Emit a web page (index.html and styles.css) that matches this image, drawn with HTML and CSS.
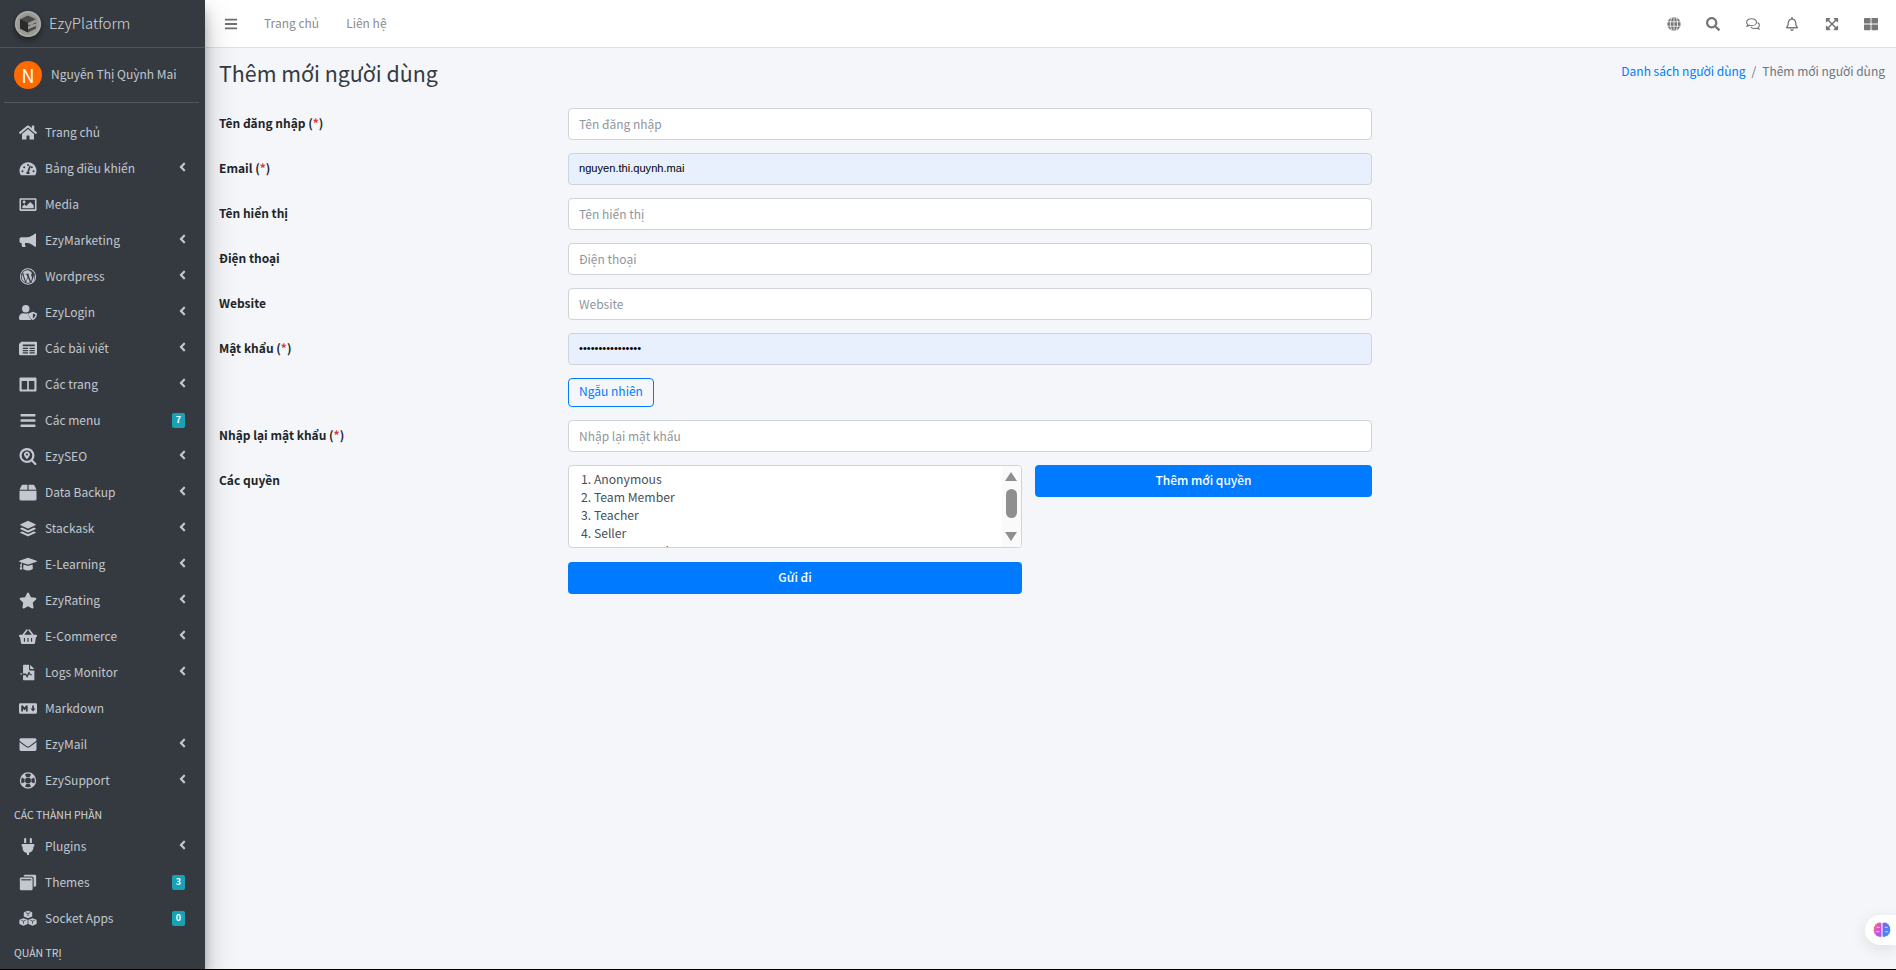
FILE: index.html
```html
<!DOCTYPE html>
<html lang="vi">
<head>
<meta charset="utf-8">
<title>Thêm mới người dùng</title>
<link rel="stylesheet" href="styles.css">
</head>
<body>
<svg class="sprite" xmlns="http://www.w3.org/2000/svg" aria-hidden="true">
  <symbol id="i-home" viewBox="0 0 576 512"><path d="M280.37 148.26L96 300.11V464a16 16 0 0 0 16 16l112.06-.29a16 16 0 0 0 15.92-16V368a16 16 0 0 1 16-16h64a16 16 0 0 1 16 16v95.64a16 16 0 0 0 16 16.05L464 480a16 16 0 0 0 16-16V300L295.67 148.26a12.19 12.19 0 0 0-15.3 0zM571.6 251.47L488 182.56V44.05a12 12 0 0 0-12-12h-56a12 12 0 0 0-12 12v72.61L318.47 43a48 48 0 0 0-61 0L4.34 251.47a12 12 0 0 0-1.6 16.9l25.5 31A12 12 0 0 0 45.15 301l235.22-193.74a12.19 12.19 0 0 1 15.3 0L530.9 301a12 12 0 0 0 16.9-1.6l25.5-31a12 12 0 0 0-1.7-16.93z"/></symbol>
  <symbol id="i-bars" viewBox="0 0 448 512"><path d="M16 132h416c8.837 0 16-7.163 16-16V76c0-8.837-7.163-16-16-16H16C7.163 60 0 67.163 0 76v40c0 8.837 7.163 16 16 16zm0 160h416c8.837 0 16-7.163 16-16v-40c0-8.837-7.163-16-16-16H16c-8.837 0-16 7.163-16 16v40c0 8.837 7.163 16 16 16zm0 160h416c8.837 0 16-7.163 16-16v-40c0-8.837-7.163-16-16-16H16c-8.837 0-16 7.163-16 16v40c0 8.837 7.163 16 16 16z"/></symbol>
  <symbol id="i-search" viewBox="0 0 512 512"><path d="M505 442.7L405.3 343c-4.5-4.5-10.6-7-17-7H372c27.6-35.3 44-79.7 44-128C416 93.1 322.9 0 208 0S0 93.1 0 208s93.1 208 208 208c48.3 0 92.7-16.4 128-44v16.3c0 6.4 2.5 12.5 7 17l99.7 99.7c9.4 9.4 24.6 9.4 33.9 0l28.3-28.3c9.4-9.4 9.4-24.6.1-34zM208 336c-70.7 0-128-57.2-128-128 0-70.7 57.2-128 128-128 70.7 0 128 57.2 128 128 0 70.7-57.2 128-128 128z"/></symbol>
  <symbol id="i-star" viewBox="0 0 576 512"><path d="M259.3 17.8L194 150.2 47.9 171.5c-26.2 3.8-36.7 36.1-17.7 54.6l105.7 103-25 145.5c-4.5 26.3 23.2 46 46.4 33.7L288 439.6l130.7 68.7c23.2 12.2 50.9-7.4 46.4-33.7l-25-145.5 105.7-103c19-18.5 8.5-50.8-17.7-54.6L382 150.2 316.7 17.8c-11.7-23.6-45.6-23.9-57.4 0z"/></symbol>
  <symbol id="i-angle" viewBox="0 0 256 512"><path d="M31.7 239l136-136c9.4-9.4 24.6-9.4 33.9 0l22.6 22.6c9.4 9.4 9.4 24.6 0 33.9L127.9 256l96.4 96.4c9.4 9.4 9.4 24.6 0 33.9L201.7 409c-9.4 9.4-24.6 9.4-33.9 0l-136-136c-9.5-9.4-9.5-24.6-.1-34z"/></symbol>
  <symbol id="i-mail" viewBox="0 0 512 512"><path d="M502.3 190.8c3.9-3.1 9.7-.2 9.7 4.7V400c0 26.5-21.5 48-48 48H48c-26.5 0-48-21.5-48-48V195.6c0-5 5.7-7.8 9.7-4.7 22.4 17.4 52.1 39.5 154.1 113.6 21.1 15.4 56.7 47.8 92.2 47.6 35.7.3 72-32.8 92.3-47.6 102-74.1 131.6-96.3 154-113.7zM256 320c23.2.4 56.6-29.2 73.4-41.4 132.7-96.3 142.8-104.7 173.4-128.7 5.8-4.5 9.2-11.5 9.2-18.9v-19c0-26.5-21.5-48-48-48H48C21.5 64 0 85.5 0 112v19c0 7.4 3.4 14.3 9.2 18.9 30.6 23.9 40.7 32.4 173.4 128.7 16.8 12.2 50.2 41.8 73.4 41.4z"/></symbol>
  <symbol id="i-grid" viewBox="0 0 512 512"><path d="M296 32h192c13.255 0 24 10.745 24 24v160c0 13.255-10.745 24-24 24H296c-13.255 0-24-10.745-24-24V56c0-13.255 10.745-24 24-24zm-80 0H24C10.745 32 0 42.745 0 56v160c0 13.255 10.745 24 24 24h192c13.255 0 24-10.745 24-24V56c0-13.255-10.745-24-24-24zM0 296v160c0 13.255 10.745 24 24 24h192c13.255 0 24-10.745 24-24V296c0-13.255-10.745-24-24-24H24c-13.255 0-24 10.745-24 24zm296 184h192c13.255 0 24-10.745 24-24V296c0-13.255-10.745-24-24-24H296c-13.255 0-24 10.745-24 24v160c0 13.255 10.745 24 24 24z"/></symbol>
  <symbol id="i-expand" viewBox="0 0 448 512"><path d="M448 344v112a23.94 23.94 0 0 1-24 24H312c-21.39 0-32.09-25.9-17-41l36.2-36.2L224 295.6 116.77 402.9 153 439c15.09 15.1 4.39 41-17 41H24a23.94 23.94 0 0 1-24-24V344c0-21.4 25.89-32.1 41-17l36.19 36.2L184.46 256 77.18 148.7 41 185c-15.1 15.1-41 4.4-41-17V56a23.94 23.94 0 0 1 24-24h112c21.39 0 32.09 25.9 17 41l-36.2 36.2L224 216.4l107.23-107.3L295 73c-15.09-15.1-4.39-41 17-41h112a23.94 23.94 0 0 1 24 24v112c0 21.4-25.89 32.1-41 17l-36.19-36.2L263.54 256l107.28 107.3L407 327.1c15.1-15.2 41-4.5 41 16.9z"/></symbol>
  <symbol id="i-bell" viewBox="0 0 448 512"><path d="M439.39 362.29c-19.32-20.76-55.47-51.99-55.47-154.29 0-77.7-54.48-139.9-127.94-155.16V32c0-17.67-14.32-32-31.98-32s-31.98 14.33-31.98 32v20.84C118.56 68.1 64.08 130.3 64.08 208c0 102.3-36.15 133.53-55.47 154.29-6 6.45-8.66 14.16-8.61 21.71.11 16.4 12.98 32 32.1 32h383.8c19.12 0 32-15.6 32.1-32 .05-7.55-2.61-15.27-8.61-21.71zM67.53 368c21.22-27.97 44.42-74.33 44.53-159.42 0-.2-.06-.38-.06-.58 0-61.86 50.14-112 112-112s112 50.14 112 112c0 .2-.06.38-.06.58.11 85.1 23.31 131.46 44.53 159.42H67.53zM224 512c35.32 0 63.97-28.65 63.97-64H160.03c0 35.35 28.65 64 63.97 64z"/></symbol>
  <symbol id="i-globe" viewBox="0 0 24 24"><circle cx="12" cy="12" r="11.5"/><path d="M1 8.200h22M1 15.800h22M12 .5v23M8.600 1C5 7 5 17 8.600 23M15.400 1C19 7 19 17 15.400 23" fill="none" stroke="#fff" stroke-width="1.300"/></symbol>
  <symbol id="i-comments" viewBox="0 0 24 24"><path d="M9.500 3C4.800 3 1 5.700 1 9c0 1.500.8 2.900 2.100 4-.3 1.100-1.100 2.100-1.600 2.700 1.600-.1 3.200-.7 4.300-1.500 1.100.4 2.400.7 3.700.7 4.700 0 8.500-2.700 8.500-6S14.200 3 9.500 3z" fill="none" stroke="currentColor" stroke-width="1.900"/><path d="M19.600 9.500c2 1 3.400 2.500 3.400 4.500 0 1.500-.8 2.800-2.100 3.900.3 1.100 1.100 2.100 1.600 2.700-1.600-.1-3.200-.7-4.300-1.500-1 .4-2.300.7-3.600.7-2.600 0-4.900-1-6.300-2.500" fill="none" stroke="currentColor" stroke-width="1.900"/></symbol>
  <symbol id="i-gauge" viewBox="0 0 24 24"><path fill-rule="evenodd" d="M12 3C5.400 3 0 8.400 0 15c0 2.200.6 4.300 1.700 6 .2.300.6.500 1 .5h18.600c.4 0 .8-.2 1-.5 1.100-1.700 1.700-3.800 1.700-6 0-6.600-5.400-12-12-12zm0 2.800a1.400 1.400 0 1 1 0 2.800 1.400 1.400 0 0 1 0-2.800zM4.200 17.200a1.400 1.400 0 1 1 0-2.800 1.400 1.400 0 0 1 0 2.800zm2.400-5.600a1.400 1.400 0 1 1 0-2.800 1.400 1.400 0 0 1 0 2.800zm7.600 8.100h-4.400a3 3 0 0 1 1.300-3.500l2.700-7.600c.2-.6.800-.9 1.400-.7.6.2.9.8.7 1.400l-2.500 7.500c.9.700 1.200 1.900.8 2.900zm3.200-8.100a1.400 1.400 0 1 1 0-2.800 1.400 1.400 0 0 1 0 2.800zm2.400 5.600a1.400 1.400 0 1 1 0-2.800 1.400 1.400 0 0 1 0 2.800z"/></symbol>
  <symbol id="i-image" viewBox="0 0 24 24"><path fill-rule="evenodd" d="M1.500 3h21c.8 0 1.500.7 1.500 1.500v15c0 .8-.7 1.500-1.500 1.500h-21C.7 21 0 20.300 0 19.500v-15C0 3.700.7 3 1.500 3zm.7 2.200v13.600h19.600V5.200H2.200zM6.500 6.500a2 2 0 1 1 0 4 2 2 0 0 1 0-4zM4 17.200v-2.400l3-3 2.400 2.400 5.800-5.800L20 13.200v4H4z"/></symbol>
  <symbol id="i-horn" viewBox="0 0 24 24"><path d="M22.800 2.100c-.3-.2-.6-.2-.9 0C18.600 4.700 15 7.500 10.500 7.500h-8C1.100 7.500 0 8.600 0 10v3c0 1.400 1.100 2.500 2.500 2.500H3c-.1.5-.1 1-.1 1.500 0 1.300.3 2.600.9 3.700.2.300.5.500.9.500h3c.8 0 1.300-.9.800-1.500-.5-.8-.8-1.700-.8-2.700 0-.5.100-1 .2-1.500h2.600c4.500 0 8.100 2.800 11.400 5.400.3.200.6.200.9 0 .3-.1.500-.4.500-.7V2.800c0-.3-.2-.6-.5-.7z"/></symbol>
  <symbol id="i-wp" viewBox="0 0 24 24"><path fill-rule="evenodd" d="M12 .5a11.500 11.500 0 1 0 0 23 11.500 11.500 0 0 0 0-23zm0 1.300a10.200 10.200 0 1 1 0 20.400 10.200 10.200 0 0 1 0-20.400zm0 1.200a9 9 0 0 0-8 4.900h1.500l1.300.1v.9l-1.300.1 3.700 10 2.200-6.400-1.600-3.600-1.300-.1v-.9h5.300v.9l-1.300.1 3.700 10 1.100-3.500c.5-1.800.3-3-.4-4.200-.5-.8-.8-1.500-.4-2.400.3-.7.900-1 1.500-1A9 9 0 0 0 12 3zM3 12c0 3.500 2 6.600 5 8.100L3.700 8.600C3.200 9.600 3 10.800 3 12zm18 0c0-1.200-.2-2.300-.7-3.300.1 1.200 0 2.400-.4 3.600l-3 8.500A9 9 0 0 0 21 12zm-9 1.300L9.400 20.600a9 9 0 0 0 5.300-.1L12 13.300z"/></symbol>
  <symbol id="i-usershield" viewBox="0 0 24 20"><circle cx="9" cy="5" r="5"/><path d="M0 18v-1.500C0 13.500 2.500 11 5.500 11h1c.8.400 1.600.5 2.500.5s1.700-.1 2.500-.5h1.200c-.1 2.500.7 6 3.600 8.500-.4.300-.9.500-1.300.5H2a2 2 0 0 1-2-2z"/><path fill-rule="evenodd" d="M18.500 9l5 2c.3.100.5.400.5.700 0 3.800-2 7-5.300 8.200-.1.100-.3.100-.4 0-3.300-1.200-5.300-4.400-5.300-8.200 0-.3.200-.6.500-.7l5-2zm0 2.200v6.800c2-.9 3.200-2.800 3.300-5.200l-3.300-1.600z"/></symbol>
  <symbol id="i-news" viewBox="0 0 24 18"><path fill-rule="evenodd" d="M3 0h20c.6 0 1 .4 1 1v15c0 1.100-.9 2-2 2H2a2 2 0 0 1-2-2V3.500C0 2.700.7 2 1.500 2H2V1c0-.6.4-1 1-1zM5 3.500h16V6H5V3.500zM5 8h7v1.500H5V8zm9 0h7v1.500h-7V8zM5 11h7v1.500H5V11zm9 0h7v1.500h-7V11zM5 14h7v1.500H5V14zm9 0h7v1.500h-7V14z"/></symbol>
  <symbol id="i-cols" viewBox="0 0 24 24"><path fill-rule="evenodd" d="M1.500 2h21c.8 0 1.500.7 1.500 1.500v17c0 .8-.7 1.500-1.500 1.500h-21C.7 22 0 21.300 0 20.500v-17C0 2.700.7 2 1.500 2zM3 7v12h7.800V7H3zm10.200 0v12H21V7h-7.800z"/></symbol>
  <symbol id="i-seo" viewBox="0 0 24 24"><path fill-rule="evenodd" d="M10.500 0a10.500 10.500 0 0 1 8.400 16.800l4.600 4.600c.6.600.6 1.500 0 2.100-.6.600-1.500.6-2.100 0l-4.600-4.600A10.500 10.500 0 1 1 10.500 0zm0 3a7.500 7.500 0 1 0 0 15 7.500 7.500 0 0 0 0-15zm0 2c2.300 0 4.200 1.900 4.200 4.200 0 1.900-2.800 5.200-3.700 6.300-.3.300-.7.300-1 0-.9-1.100-3.700-4.400-3.700-6.300C6.300 6.900 8.200 5 10.500 5zm0 2.700a1.500 1.500 0 1 0 0 3 1.500 1.500 0 0 0 0-3z"/></symbol>
  <symbol id="i-box" viewBox="0 0 24 24"><path d="M11.200 1v7H0l2.700-5.700C3.100 1.500 3.900 1 4.800 1h6.400zM12.800 1h6.400c.9 0 1.700.5 2.100 1.300L24 8H12.800V1zM0 9.500h24V21c0 1.200-1 2.200-2.200 2.200H2.200C1 23.200 0 22.200 0 21V9.500z"/></symbol>
  <symbol id="i-layers" viewBox="0 0 24 24"><path d="M12 1l10.500 5c.7.300.7 1.100 0 1.400L12.500 12c-.3.200-.7.200-1 0L1.500 7.400c-.7-.3-.7-1.100 0-1.400L12 1z"/><path d="M3.800 10.600l-2.300 1c-.7.300-.7 1.100 0 1.400l10 4.600c.3.200.7.200 1 0l10-4.600c.7-.3.700-1.100 0-1.400l-2.300-1-7.700 3.700c-.3.200-.7.200-1 0l-7.700-3.700z"/><path d="M3.800 16.100l-2.300 1c-.7.300-.7 1.100 0 1.400l10 4.500c.3.200.7.200 1 0l10-4.500c.7-.3.700-1.100 0-1.400l-2.300-1-7.700 3.600c-.3.200-.7.200-1 0l-7.700-3.600z"/></symbol>
  <symbol id="i-grad" viewBox="0 0 24 20"><path d="M12 1l11.500 4c.6.200.6 1 0 1.200L12.600 10c-.4.100-.8.100-1.200 0L4.300 7.500c-.6.500-1 1.300-1 2.100.5.200.8.700.8 1.200s-.3.900-.7 1.100l1 4.200c.1.300-.1.600-.4.600H1.500c-.3 0-.5-.3-.4-.6l1-4.200c-.4-.2-.7-.6-.7-1.100 0-.6.400-1.100.9-1.200.1-1 .4-1.900 1-2.700L.5 6.200C-.1 6-.1 5.200.5 5L12 1z"/><path d="M6 10l5 1.700c.6.200 1.300.2 1.900 0l5.100-1.700.5 5c0 1.700-2.900 3-6.500 3s-6.500-1.300-6.500-3L6 10z"/></symbol>
  <symbol id="i-basket" viewBox="0 0 24 20"><path fill-rule="evenodd" d="M0 8.500c0-.6.4-1 1-1h3.300L9.500.9c.3-.5 1-.7 1.500-.4.500.3.700 1 .4 1.500L7 7.500h10l-4.400-5.500c-.3-.5-.1-1.200.4-1.500.5-.3 1.200-.1 1.500.4l5.200 6.600H23c.6 0 1 .4 1 1v1c0 .6-.4 1-1 1h-.4l-1.200 7.800c-.1 1-1 1.700-2 1.700H4.600c-1 0-1.900-.7-2-1.700L1.400 10.500H1c-.6 0-1-.4-1-1v-1zM6.500 12v5H8v-5H6.500zm4.700 0v5h1.600v-5h-1.600zm4.800 0v5h1.500v-5H16z"/></symbol>
  <symbol id="i-logfile" viewBox="0 0 24 24"><path d="M6 1h7.500v6.500c0 .8.700 1.500 1.500 1.500h6v13a1 1 0 0 1-1 1H6a1 1 0 0 1-1-1v-6h3.700l1.500 2.800c.3.500 1 .5 1.300 0l2.200-5 1 2.200h2.800v-1.500h-1.900l-1.500-3.200c-.3-.6-1.100-.6-1.400 0l-2 4.500-1.100-2.200c-.1-.2-.3-.3-.6-.3H5V2a1 1 0 0 1 1-1z"/><path d="M15 1l6 6h-6V1z"/><path d="M1 13.200h3v1.500H1z"/></symbol>
  <symbol id="i-md" viewBox="0 0 28 18"><path fill-rule="evenodd" d="M2 1h24a2 2 0 0 1 2 2v12a2 2 0 0 1-2 2H2a2 2 0 0 1-2-2V3a2 2 0 0 1 2-2zm1.500 3.500v9h2.700V9.200l2.300 2.900 2.300-2.900v4.300h2.700v-9h-2.700L8.500 7.400 6.200 4.500H3.500zm17 0V9h-2.700l4 4.500 4-4.500h-2.600V4.500h-2.700z"/></symbol>
  <symbol id="i-ring" viewBox="0 0 24 24"><path fill-rule="evenodd" d="M12 .5a11.500 11.500 0 1 1 0 23 11.500 11.500 0 0 1 0-23zM7.600 3.400l2.300 4c1.300-.6 2.900-.6 4.200 0l2.300-4a9.700 9.700 0 0 0-8.800 0zM3.400 7.600a9.700 9.700 0 0 0 0 8.800l4-2.300c-.6-1.300-.6-2.900 0-4.200l-4-2.300zm17.200 0l-4 2.300c.6 1.300.6 2.900 0 4.200l4 2.300a9.700 9.700 0 0 0 0-8.800zM12 7.800a4.200 4.200 0 1 0 0 8.400 4.200 4.200 0 0 0 0-8.400zm-2.100 8.800l-2.300 4a9.700 9.700 0 0 0 8.800 0l-2.300-4c-1.300.6-2.900.6-4.200 0z"/></symbol>
  <symbol id="i-plug" viewBox="0 0 24 24"><path d="M8 0c.8 0 1.500.7 1.500 1.500V7h-3V1.500C6.500.7 7.200 0 8 0zM16 0c.8 0 1.500.7 1.500 1.500V7h-3V1.500C14.500.7 15.200 0 16 0zM4 8.500h16c.6 0 1 .4 1 1V11c0 .6-.4 1-1 1h-.3v1.500c0 3.600-2.600 6.700-6.200 7.300V24h-3v-2.700c-3.600-.6-6.200-3.700-6.200-7.300V12H4c-.6 0-1-.4-1-1V9.500c0-.6.400-1 1-1z"/></symbol>
  <symbol id="i-windows" viewBox="0 0 24 24"><path d="M8 1h13.500c1.100 0 2 .9 2 2v13c0 1.100-.9 2-2 2H20V6.500c0-1.700-1.300-3-3-3H6V3c0-1.100.9-2 2-2z"/><path d="M2.500 5h14c1.100 0 2 .9 2 2v14c0 1.100-.9 2-2 2h-14c-1.100 0-2-.9-2-2V7c0-1.100.9-2 2-2z"/><path d="M2.500 8.200h14" stroke="#343a40" stroke-width="1.600"/></symbol>
  <symbol id="i-cubes" viewBox="0 0 24 22"><path d="M12 .5l5.600 2.200v5.600L12 10.700 6.400 8.300V2.700L12 .5z"/><path d="M6 10.500l5.500 2.200v5.600L6 20.700.5 18.300v-5.600L6 10.500zM18 10.500l5.500 2.200v5.600L18 20.700l-5.500-2.400v-5.600l5.500-2.200z"/><path d="M9 3.200l3 1.200 3-1.200M12 4.400v3.500M3 13.300l3 1.200 3-1.200M6 14.500V18M15 13.300l3 1.200 3-1.200M18 14.500V18" fill="none" stroke="#343a40" stroke-width="1"/></symbol>
  <symbol id="i-logo" viewBox="0 0 26 26"><path d="M13 4.500l8 3.700v9.400L13 21.500l-8-3.900V8.200z" fill="#4a4a4a"/><path d="M5 8.200l8 3.700v9.600l-8-3.900z" fill="#2a2a2a"/><path d="M13 11.900l8-3.700v3l-4 2.200 4-.6v2.200l-8 3.200v-2.600l3.600-2.200-3.600.7z" fill="#9a9a98"/></symbol>
  <symbol id="i-brain" viewBox="0 0 20 18"><defs><linearGradient id="brain-l" x1="0" y1="0" x2="1" y2="1"><stop offset="0" stop-color="#ff8a1e"/><stop offset=".5" stop-color="#d94fe0"/><stop offset="1" stop-color="#9b57f5"/></linearGradient><linearGradient id="brain-r" x1="0" y1="0" x2="1" y2="1"><stop offset="0" stop-color="#8a5cf0"/><stop offset="1" stop-color="#1e9bff"/></linearGradient></defs><path d="M9.400 1.500C8.700.6 7.500.3 6.500.8 5.500.6 4.400 1.100 4 2.100 2.800 2.400 2 3.400 2 4.600c-1.100.7-1.500 2.100-1 3.300-.7 1-.6 2.500.3 3.400-.2 1.300.6 2.600 1.900 3 .4 1.200 1.600 2 2.800 1.800.8.900 2.300 1 3.400.3V1.500z" fill="url(#brain-l)"/><path d="M10.600 1.500c.7-.9 1.900-1.200 2.900-.7 1-.2 2.100.3 2.500 1.300 1.200.3 2 1.300 2 2.500 1.100.7 1.500 2.100 1 3.300.7 1 .6 2.500-.3 3.400.2 1.300-.6 2.600-1.900 3-.4 1.200-1.600 2-2.800 1.800-.8.900-2.300 1-3.400.3V1.500z" fill="url(#brain-r)"/><path d="M4 6h3.500M3.500 11H7M13 6h3.500M13.500 11H17" stroke="#fff" stroke-width=".8" fill="none"/></symbol>
</svg>

<div class="app">
  <aside class="sidebar">
    <a class="brand" href="#">
      <span class="brand-logo"><svg class="brand-mark"><use href="#i-logo"/></svg></span>
      <span class="brand-text">EzyPlatform</span>
    </a>
    <div class="user">
      <span class="avatar">N</span>
      <span class="user-name">Nguyễn Thị Quỳnh Mai</span>
    </div>
    <nav class="menu">
      <a class="item" href="#"><svg class="ico"><use href="#i-home"/></svg><span class="label">Trang chủ</span></a>
      <a class="item" href="#"><svg class="ico"><use href="#i-gauge"/></svg><span class="label">Bảng điều khiển</span><svg class="caret"><use href="#i-angle"/></svg></a>
      <a class="item" href="#"><svg class="ico"><use href="#i-image"/></svg><span class="label">Media</span></a>
      <a class="item" href="#"><svg class="ico"><use href="#i-horn"/></svg><span class="label">EzyMarketing</span><svg class="caret"><use href="#i-angle"/></svg></a>
      <a class="item" href="#"><svg class="ico"><use href="#i-wp"/></svg><span class="label">Wordpress</span><svg class="caret"><use href="#i-angle"/></svg></a>
      <a class="item" href="#"><svg class="ico"><use href="#i-usershield"/></svg><span class="label">EzyLogin</span><svg class="caret"><use href="#i-angle"/></svg></a>
      <a class="item" href="#"><svg class="ico"><use href="#i-news"/></svg><span class="label">Các bài viết</span><svg class="caret"><use href="#i-angle"/></svg></a>
      <a class="item" href="#"><svg class="ico"><use href="#i-cols"/></svg><span class="label">Các trang</span><svg class="caret"><use href="#i-angle"/></svg></a>
      <a class="item" href="#"><svg class="ico"><use href="#i-bars"/></svg><span class="label">Các menu</span><span class="badge">7</span></a>
      <a class="item" href="#"><svg class="ico"><use href="#i-seo"/></svg><span class="label">EzySEO</span><svg class="caret"><use href="#i-angle"/></svg></a>
      <a class="item" href="#"><svg class="ico"><use href="#i-box"/></svg><span class="label">Data Backup</span><svg class="caret"><use href="#i-angle"/></svg></a>
      <a class="item" href="#"><svg class="ico"><use href="#i-layers"/></svg><span class="label">Stackask</span><svg class="caret"><use href="#i-angle"/></svg></a>
      <a class="item" href="#"><svg class="ico"><use href="#i-grad"/></svg><span class="label">E-Learning</span><svg class="caret"><use href="#i-angle"/></svg></a>
      <a class="item" href="#"><svg class="ico"><use href="#i-star"/></svg><span class="label">EzyRating</span><svg class="caret"><use href="#i-angle"/></svg></a>
      <a class="item" href="#"><svg class="ico"><use href="#i-basket"/></svg><span class="label">E-Commerce</span><svg class="caret"><use href="#i-angle"/></svg></a>
      <a class="item" href="#"><svg class="ico"><use href="#i-logfile"/></svg><span class="label">Logs Monitor</span><svg class="caret"><use href="#i-angle"/></svg></a>
      <a class="item" href="#"><svg class="ico"><use href="#i-md"/></svg><span class="label">Markdown</span></a>
      <a class="item" href="#"><svg class="ico"><use href="#i-mail"/></svg><span class="label">EzyMail</span><svg class="caret"><use href="#i-angle"/></svg></a>
      <a class="item" href="#"><svg class="ico"><use href="#i-ring"/></svg><span class="label">EzySupport</span><svg class="caret"><use href="#i-angle"/></svg></a>
      <div class="menu-head">CÁC THÀNH PHẦN</div>
      <a class="item" href="#"><svg class="ico"><use href="#i-plug"/></svg><span class="label">Plugins</span><svg class="caret"><use href="#i-angle"/></svg></a>
      <a class="item" href="#"><svg class="ico"><use href="#i-windows"/></svg><span class="label">Themes</span><span class="badge">3</span></a>
      <a class="item" href="#"><svg class="ico"><use href="#i-cubes"/></svg><span class="label">Socket Apps</span><span class="badge">0</span></a>
      <div class="menu-head">QUẢN TRỊ</div>
    </nav>
  </aside>

  <div class="main">
    <header class="topbar">
      <a class="bars" href="#"><svg class="top-ico"><use href="#i-bars"/></svg></a>
      <a class="top-link" href="#">Trang chủ</a>
      <a class="top-link" href="#">Liên hệ</a>
      <div class="top-actions">
        <a class="action" href="#"><svg class="top-ico"><use href="#i-globe"/></svg></a>
        <a class="action" href="#"><svg class="top-ico"><use href="#i-search"/></svg></a>
        <a class="action" href="#"><svg class="top-ico"><use href="#i-comments"/></svg></a>
        <a class="action" href="#"><svg class="top-ico"><use href="#i-bell"/></svg></a>
        <a class="action" href="#"><svg class="top-ico"><use href="#i-expand"/></svg></a>
        <a class="action" href="#"><svg class="top-ico"><use href="#i-grid"/></svg></a>
      </div>
    </header>

    <main class="content">
      <div class="page-head">
        <h1 class="title">Thêm mới người dùng</h1>
        <div class="crumbs"><a href="#">Danh sách người dùng</a><span class="sep">/</span><span>Thêm mới người dùng</span></div>
      </div>
      <form class="form">
        <label class="f-label">Tên đăng nhập (<span class="req">*</span>)</label>
        <input class="field" type="text" placeholder="Tên đăng nhập">
        <label class="f-label">Email (<span class="req">*</span>)</label>
        <input class="field filled" type="text" value="nguyen.thi.quynh.mai">
        <label class="f-label">Tên hiển thị</label>
        <input class="field" type="text" placeholder="Tên hiển thị">
        <label class="f-label">Điện thoại</label>
        <input class="field" type="text" placeholder="Điện thoại">
        <label class="f-label">Website</label>
        <input class="field" type="text" placeholder="Website">
        <label class="f-label">Mật khẩu (<span class="req">*</span>)</label>
        <input class="field filled" type="password" value="aaaaaaaaaaaaaaaa">
        <span class="f-label"></span>
        <div><button class="btn-outline" type="button">Ngẫu nhiên</button></div>
        <label class="f-label">Nhập lại mật khẩu (<span class="req">*</span>)</label>
        <input class="field" type="password" placeholder="Nhập lại mật khẩu">
        <label class="f-label">Các quyền</label>
        <div class="roles">
          <div class="list-wrap">
            <select class="listbox" multiple>
              <option>1. Anonymous</option>
              <option>2. Team Member</option>
              <option>3. Teacher</option>
              <option>4. Seller</option>
              <option>5. Agency Member</option>
              <option>6. Editor</option>
              <option>7. Contributor</option>
              <option>8. Author</option>
              <option>9. Subscriber</option>
              <option>10. Customer</option>
            </select>
            <div class="scroll" aria-hidden="true">
              <span class="scroll-up"></span>
              <span class="scroll-thumb"></span>
              <span class="scroll-down"></span>
            </div>
          </div>
          <button class="btn-primary" type="button">Thêm mới quyền</button>
          <button class="btn-primary" type="submit">Gửi đi</button>
        </div>
      </form>
    </main>
  </div>
</div>
<div class="brain-pill"><svg class="brain"><use href="#i-brain"/></svg></div>
</body>
</html>
```

FILE: styles.css
```css
* { box-sizing: border-box; }
html { height: 100%; background: #000; }
body {
  margin: 0;
  height: 969px;
  overflow: hidden;
  font-family: "Noto Sans CJK SC", "Noto Sans", sans-serif;
  font-size: 12px;
  line-height: 18px;
  color: #212529;
  background: #f4f6f9;
}
a { text-decoration: none; color: inherit; }
.sprite { position: absolute; width: 0; height: 0; overflow: hidden; }
.app { display: flex; height: 969px; }

/* Sidebar */
.sidebar {
  width: 205px;
  flex: none;
  background: #343a40;
  color: #c2c7d0;
  overflow: hidden;
  box-shadow: 0 14px 28px rgba(0,0,0,.25), 0 10px 10px rgba(0,0,0,.22);
  position: relative;
  z-index: 2;
}
.brand {
  display: flex;
  align-items: center;
  height: 48px;
  padding-left: 15px;
  border-bottom: 1px solid #4b545c;
}
.brand-logo {
  width: 26px;
  height: 26px;
  border-radius: 50%;
  background: radial-gradient(circle at 50% 50%, #8f8f8c 0%, #9c9c98 60%, #cfcfcb 78%, #b9b9b5 100%);
  box-shadow: 0 3px 6px rgba(0,0,0,.45);
  flex: none;
}
.brand-mark { display: block; width: 26px; height: 26px; }
.brand-text { margin: -2px 0 0 8px; font-size: 15px; font-weight: 300; color: rgba(255,255,255,.8); line-height: 24px; }
.user {
  display: flex;
  align-items: center;
  height: 55px;
  margin: 0 6px 0 4px;
  padding-left: 10px;
  border-bottom: 1px solid #4f5962;
}
.avatar {
  width: 28px;
  height: 28px;
  border-radius: 50%;
  background: #ff6a00;
  color: #fff;
  font-size: 18px;
  line-height: 28px;
  text-align: center;
  flex: none;
}
.user-name { margin: -2px 0 0 9px; font-size: 12px; color: #c2c7d0; }
.menu { padding-top: 11px; }
.item {
  display: flex;
  align-items: center;
  height: 36px;
  padding-left: 19px;
  position: relative;
}
.ico { width: 18px; height: 17px; fill: currentColor; flex: none; }
.label { margin-left: 8px; font-size: 12px; }
.caret { width: 7px; height: 14px; fill: currentColor; position: absolute; left: 179px; top: 10px; }
.badge {
  position: absolute;
  left: 172px;
  top: 11px;
  width: 13px;
  height: 15px;
  border-radius: 2px;
  background: #17a2b8;
  color: #fff;
  font-size: 9px;
  font-weight: 700;
  line-height: 14px;
  text-align: center;
}
.menu-head { height: 30px; padding: 8px 0 0 14px; font-size: 10.5px; line-height: 18px; color: #d0d4db; }

/* Top bar */
.main { flex: 1; min-width: 0; display: flex; flex-direction: column; }
.topbar {
  display: flex;
  align-items: center;
  height: 48px;
  flex: none;
  padding-left: 19px;
  background: #fff;
  border-bottom: 1px solid #dee2e6;
}
.bars { display: flex; width: 40px; color: #6f6f6f; }
.top-ico { width: 14px; height: 14px; fill: currentColor; display: block; }
.top-link { margin: -2px 27px 0 0; color: #8c8c8c; font-size: 12px; }
.top-actions { margin-left: auto; display: flex; padding-right: 5px; }
.action { width: 39.5px; height: 24px; display: flex; align-items: center; justify-content: center; color: #777; }

/* Content */
.content { padding: 0 11px 0 14px; }
.page-head { display: flex; justify-content: space-between; height: 60px; }
.title { margin: 11px 0 0; font-size: 21.4px; font-weight: 400; line-height: 28px; color: #343a40; }
.crumbs { margin-top: 14px; font-size: 12px; color: #6c757d; }
.crumbs a { color: #007bff; }
.sep { padding: 0 6px; }

/* Form */
.form {
  display: grid;
  grid-template-columns: 349px 804px;
  row-gap: 13px;
}
.f-label { font-size: 12px; font-weight: 700; line-height: 18px; padding-top: 6px; color: #212529; }
.req { color: #dc3545; }
.field {
  display: block;
  width: 100%;
  height: 32px;
  padding: 0 10px 2px;
  font: 12px "Noto Sans CJK SC", "Noto Sans", sans-serif;
  color: #000;
  background: #fff;
  border: 1px solid #ced4da;
  border-radius: 4px;
  outline: 0;
}
.field::placeholder { color: #8f969d; opacity: 1; }
.filled { background: #e8f0fe; font: 11.1px "Liberation Sans", sans-serif; }
.btn-outline {
  display: block;
  width: 86px;
  height: 29px;
  padding: 0 0 3px;
  font: 12px/1 "Noto Sans CJK SC", "Noto Sans", sans-serif;
  color: #007bff;
  background: transparent;
  border: 1px solid #007bff;
  border-radius: 4px;
}
.roles { display: grid; grid-template-columns: 454px 337px; column-gap: 13px; row-gap: 14px; align-items: start; }
.list-wrap { position: relative; height: 83px; }
.listbox {
  display: block;
  width: 100%;
  height: 83px;
  padding: 4px 6px 0;
  font: 12.2px "Noto Sans CJK SC", "Noto Sans", sans-serif;
  color: #495057;
  background: #fff;
  border: 1px solid #ced4da;
  border-radius: 4px;
  outline: 0;
  overflow: hidden;
}
.listbox option { padding: 0 6px; }
.scroll {
  position: absolute;
  top: 1px;
  right: 1px;
  bottom: 1px;
  width: 19px;
  background: #fafafa;
  border-radius: 0 3px 3px 0;
}
.scroll-up, .scroll-down {
  position: absolute;
  left: 3px;
  width: 0;
  height: 0;
  border-left: 6.5px solid transparent;
  border-right: 6.5px solid transparent;
}
.scroll-up { top: 6px; border-bottom: 9px solid #8f8f8f; }
.scroll-down { bottom: 6px; border-top: 9px solid #8f8f8f; }
.scroll-thumb {
  position: absolute;
  left: 4px;
  top: 23px;
  width: 11px;
  height: 29px;
  border-radius: 6px;
  background: #8f8f8f;
}
.btn-primary {
  height: 32px;
  padding: 0 0 3px;
  font: 500 12px/1 "Noto Sans CJK SC", "Noto Sans", sans-serif;
  color: #fff;
  background: #007bff;
  border: 0;
  border-radius: 4px;
}

/* Floating widget */
.brain-pill {
  position: fixed;
  right: 0;
  top: 915px;
  width: 31px;
  height: 30px;
  background: #fff;
  border-radius: 15px 0 0 15px;
  box-shadow: 0 4px 16px rgba(0,0,0,.1);
  display: flex;
  align-items: center;
  padding-left: 8px;
}
.brain { width: 18px; height: 16px; display: block; }
```
